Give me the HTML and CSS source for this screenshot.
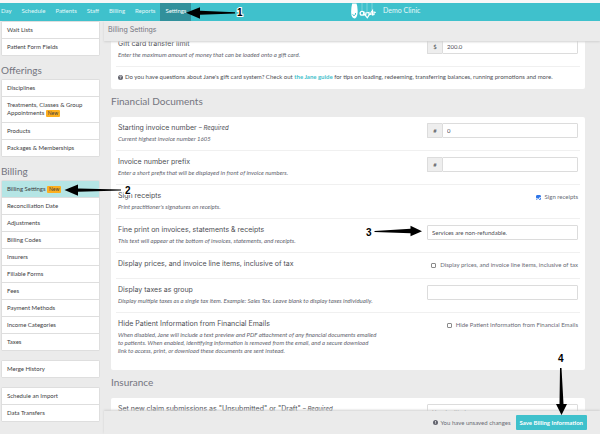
FILE: index.html
```html
<!DOCTYPE html>
<html lang="en">
<head>
<meta charset="utf-8">
<title>Billing Settings</title>
<link rel="stylesheet" href="styles.css">
</head>
<body>
<header class="topbar">
  <nav class="tabs">
    <a href="#">Day</a><a href="#">Schedule</a><a href="#">Patients</a><a href="#">Staff</a><a href="#">Billing</a><a href="#">Reports</a><a href="#" class="current">Settings</a>
  </nav>
  <div class="brand">
    <svg class="logo" width="26" height="18" viewBox="0 0 26 18" aria-hidden="true">
      <path d="M1.200 0.500Q-.5 7 .5 12.500 1.500 15.500 4 15.500 7 13.500 6.600 7 6.300 2 5.500 0.500Z" fill="#fff"/>
      <path d="M1.500 11.500 Q3 13.800 4.500 11.500V10" stroke="#3fc1cc" stroke-width="1" fill="none"/>
      <path d="M11 0V8M16 0V9M21 0V7" stroke="#a5e2e8" stroke-width=".6"/>
      <circle cx="11" cy="10.300" r="1.900" stroke="#fff" stroke-width="1.300" fill="none"/>
      <path d="M13 8.500V12L14.800 11.500M14.800 12.500V10L18 9.500V12L16.300 14.800 14.500 12.500ZM18 12L20 10.500M20 12V9.500L21.500 7.500V12L23 11.500V9L24.800 9.500" stroke="#fff" stroke-width="1.200" fill="none"/>
    </svg>
    <span>Demo Clinic</span>
  </div>
</header>
<div class="workspace">
  <aside class="sidebar">
    <ul class="menu">
      <li><a href="#">Wait Lists</a></li>
      <li><a href="#">Patient Form Fields</a></li>
    </ul>
    <h2>Offerings</h2>
    <ul class="menu">
      <li><a href="#">Disciplines</a></li>
      <li class="tall"><a href="#">Treatments, Classes &amp; Group Appointments <span class="badge">New</span></a></li>
      <li><a href="#">Products</a></li>
      <li><a href="#">Packages &amp; Memberships</a></li>
    </ul>
    <h2>Billing</h2>
    <ul class="menu">
      <li class="selected"><a href="#">Billing Settings <span class="badge">New</span></a></li>
      <li><a href="#">Reconciliation Date</a></li>
      <li><a href="#">Adjustments</a></li>
      <li><a href="#">Billing Codes</a></li>
      <li><a href="#">Insurers</a></li>
      <li><a href="#">Fillable Forms</a></li>
      <li><a href="#">Fees</a></li>
      <li><a href="#">Payment Methods</a></li>
      <li><a href="#">Income Categories</a></li>
      <li><a href="#">Taxes</a></li>
    </ul>
    <ul class="menu spaced">
      <li><a href="#">Merge History</a></li>
    </ul>
    <ul class="menu spaced">
      <li><a href="#">Schedule an Import</a></li>
      <li><a href="#">Data Transfers</a></li>
    </ul>
  </aside>
  <main class="main">
    <h1>Billing Settings</h1>
    <form class="content" id="settings">
      <section class="card">
        <div class="row">
          <div class="info">
            <label class="title" for="limit">Gift card transfer limit</label>
            <p>Enter the maximum amount of money that can be loaded onto a gift card.</p>
          </div>
          <div class="group"><span>$</span><input id="limit" type="text" value="200.0"></div>
        </div>
        <div class="row note">
          <svg width="5" height="5" viewBox="0 0 10 10" aria-hidden="true"><circle cx="5" cy="5" r="5" fill="#62636d"/><path d="M3.300 3.800Q3.500 2 5 2t1.700 1.700Q6.500 4.500 5 5.200V6M5 7v1.300" stroke="#fff" stroke-width="1.300" fill="none"/></svg>
          <span>Do you have questions about Jane's gift card system? Check out <a href="#">the Jane guide</a> for tips on loading, redeeming, transferring balances, running promotions and more.</span>
        </div>
      </section>
      <h2>Financial Documents</h2>
      <section class="card">
        <div class="row">
          <div class="info">
            <label class="title" for="start">Starting invoice number <em>– Required</em></label>
            <p>Current highest invoice number 1605</p>
          </div>
          <div class="group"><span>#</span><input id="start" type="text" value="0"></div>
        </div>
        <div class="row">
          <div class="info">
            <label class="title" for="prefix">Invoice number prefix</label>
            <p>Enter a short prefix that will be displayed in front of invoice numbers.</p>
          </div>
          <div class="group"><span>#</span><input id="prefix" type="text"></div>
        </div>
        <div class="row">
          <div class="info">
            <div class="title">Sign receipts</div>
            <p>Print practitioner's signatures on receipts.</p>
          </div>
          <label class="check"><input type="checkbox" checked>Sign receipts</label>
        </div>
        <div class="row">
          <div class="info">
            <label class="title" for="fine">Fine print on invoices, statements &amp; receipts</label>
            <p>This text will appear at the bottom of invoices, statements, and receipts.</p>
          </div>
          <div class="group"><input id="fine" type="text" value="Services are non-refundable."></div>
        </div>
        <div class="row short">
          <div class="info">
            <div class="title">Display prices, and invoice line items, inclusive of tax</div>
          </div>
          <label class="check"><input type="checkbox">Display prices, and invoice line items, inclusive of tax</label>
        </div>
        <div class="row">
          <div class="info">
            <label class="title" for="group">Display taxes as group</label>
            <p>Display multiple taxes as a single tax item. Example: Sales Tax. Leave blank to display taxes individually.</p>
          </div>
          <div class="group"><input id="group" type="text"></div>
        </div>
        <div class="row last">
          <div class="info">
            <div class="title">Hide Patient Information from Financial Emails</div>
            <p>When disabled, Jane will include a text preview and PDF attachment of any financial documents emailed<br>to patients. When enabled, identifying information is removed from the email, and a secure download<br>link to access, print, or download these documents are sent instead.</p>
          </div>
          <label class="check"><input type="checkbox">Hide Patient Information from Financial Emails</label>
        </div>
      </section>
      <h2>Insurance</h2>
      <section class="card">
        <div class="row">
          <div class="info">
            <label class="title" for="claims">Set new claim submissions as "Unsubmitted" or "Draft" <em>– Required</em></label>
          </div>
          <div class="group"><select id="claims"><option>Unsubmitted</option><option>Draft</option></select></div>
        </div>
      </section>
    </form>
    <footer class="savebar">
      <svg width="5" height="5" viewBox="0 0 10 10" aria-hidden="true"><circle cx="5" cy="5" r="5" fill="#62636d"/><path d="M5 2v3.500M5 6.800v1.300" stroke="#eee" stroke-width="1.600"/></svg>
      <span>You have unsaved changes</span>
      <button type="submit" form="settings">Save Billing Information</button>
    </footer>
  </main>
</div>
<svg class="callouts" width="600" height="434" viewBox="0 0 600 434">
  <path d="M235 12.300v1.200L200 14.800v4L186 12.700 200 7.300v3.500Z"/>
  <path d="M121 189.500v1L78 191.800v4L64.500 190 78 184.500v4Z"/>
  <path d="M374.500 231v1l36 1.300v3l11.500-5-11.500-5.500v3Z"/>
  <path d="M560 368h1.500l2 36h3.500l-5.500 11-5.500-11h3.500Z"/>
  <g>
    <text x="237" y="16">1</text>
    <text x="125" y="194">2</text>
    <text x="366" y="236">3</text>
    <text x="558" y="362">4</text>
  </g>
</svg>
</body>
</html>
```
FILE: styles.css
```css
* { box-sizing: border-box; margin: 0; }

body {
  display: flex;
  flex-direction: column;
  height: 100vh;
  overflow: hidden;
  position: relative;
  background: #ebebeb;
  color: #4d4e54;
  font: 6px/8px Lato, "Liberation Sans", sans-serif;
}

a { color: inherit; text-decoration: none; }

input, select, button { font: inherit; color: inherit; }

.topbar {
  display: flex;
  flex: none;
  height: 21px;
  border-top: 3px solid #f7f7f7;
  background: #3fc1cc;
  color: #e4f8f9;
  z-index: 2;
}

.tabs { display: flex; flex: none; width: 351px; line-height: 15px; }
.tabs a { padding: 0 5px; }
.tabs a:first-child { padding-left: 1px; }
.tabs .current { background: #31909b; color: #fff; }

.brand { display: flex; gap: 6px; font-size: 7px; line-height: 14px; }

.workspace { display: flex; flex: 1; min-height: 0; }

.sidebar { width: 100px; flex: none; padding-left: 1px; }

.sidebar h2 {
  padding-top: 5px;
  font-size: 10px;
  font-weight: 400;
  line-height: 18px;
  color: #74757f;
}

.menu {
  padding: 0;
  list-style: none;
  border: 1px solid #dedede;
  border-bottom: 0;
  border-radius: 2px;
  color: #3c3d42;
}

.menu li {
  height: 17px;
  padding: 4px 5px;
  border-bottom: 1px solid #dedede;
  background: #fff;
}

.menu .tall { height: 26px; }
.menu .selected { background: #b5e5e5; }
.menu.spaced { margin-top: 9px; }

.badge {
  display: inline-block;
  padding: 0 2px;
  border-radius: 1px;
  background: #fcaf1f;
  font-size: 5px;
  line-height: 7px;
  vertical-align: bottom;
}

.main {
  display: flex;
  flex: 1;
  flex-direction: column;
  min-width: 0;
  margin-left: 4px;
}

.main h1 {
  flex: none;
  height: 20px;
  padding-left: 4px;
  background: #ebebeb;
  box-shadow: 0 1px 2px #d0d0d0;
  color: #74757f;
  font: 400 7px/18px Inter, sans-serif;
  z-index: 1;
}

.content {
  flex: 1;
  min-height: 0;
  margin-top: -8px;
  padding: 0 15px 0 7px;
}

.content h2 {
  padding-bottom: 4px;
  font-size: 10px;
  font-weight: 400;
  line-height: 24px;
  color: #74757f;
}

.card { padding: 0 5px; border-radius: 2px; background: #fff; }

.row {
  display: flex;
  justify-content: space-between;
  height: 34px;
  padding: 6px 2px 0;
  border-bottom: 1px solid #f0f0f0;
}

.row:last-child { border-bottom: 0; }
.row.short { height: 26px; }
.row.last { height: 57px; }

.row.note { gap: 2px; justify-content: flex-start; height: 22px; }
.note svg { margin-top: 2px; }
.note a { color: #3fc1cc; font-weight: 700; }

.info { white-space: nowrap; }
.title { display: block; font: 7px/10px Inter, sans-serif; }
.title em { font-size: 6px; }
.info p { margin-top: 2px; font-style: italic; color: #62636e; }

.group { display: flex; width: 151px; height: 15px; }

.group span {
  width: 15px;
  border: 1px solid #dcdcdc;
  border-right: 0;
  border-radius: 1px 0 0 1px;
  background: #eee;
  line-height: 13px;
  text-align: center;
}

.group input, .group select {
  flex: 1;
  min-width: 0;
  padding: 0 4px;
  border: 1px solid #dcdcdc;
  border-radius: 1px;
  background: #fff;
  appearance: none;
}

.check { display: flex; gap: 4px; height: 12px; align-items: center; color: #6a6b76; }

.check input {
  width: 5px;
  height: 5px;
  margin: 0;
  border: 1px solid #8a8a8a;
  border-radius: 1px;
  background: #fff;
  appearance: none;
}

.check input:checked {
  display: grid;
  place-items: center;
  border-color: #2f76e8;
  background: #2f76e8;
}

.check input:checked::after {
  content: "";
  width: 2px;
  height: 3px;
  border: solid #fff;
  border-width: 0 1px 1px 0;
  transform: rotate(40deg);
}

.savebar {
  display: flex;
  flex: none;
  align-items: center;
  justify-content: flex-end;
  gap: 3px;
  height: 23px;
  padding-right: 13px;
  background: #ebebeb;
  box-shadow: 0 -1px 2px #d0d0d0;
  color: #6a6b76;
  z-index: 1;
}

.savebar button {
  height: 15px;
  margin-left: 2px;
  padding: 0 4px;
  border: 0;
  border-radius: 1px;
  background: #3fc1cc;
  color: #fff;
  font-weight: 700;
}

.callouts { position: absolute; top: 0; left: 0; z-index: 3; pointer-events: none; }
.callouts g {
  font: 700 10px "Liberation Sans", sans-serif;
  stroke: #fff;
  stroke-width: 2px;
  paint-order: stroke;
}
```
